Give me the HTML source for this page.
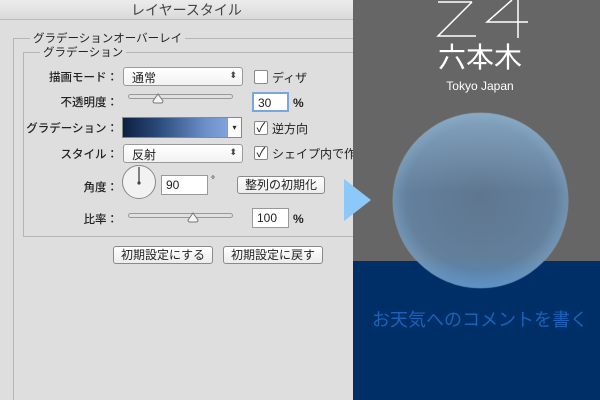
<!DOCTYPE html>
<html><head><meta charset="utf-8"><style>
*{margin:0;padding:0;box-sizing:border-box}
body{width:600px;height:400px;overflow:hidden;position:relative;background:#dedede;font-family:"Liberation Sans","Noto Sans CJK JP",sans-serif;font-size:12px;color:#222}
.a{position:absolute}
.lbl{position:absolute;text-align:right;font-size:11.5px;white-space:nowrap;font-weight:500}
.sel{position:absolute;height:19px;background:linear-gradient(#fff,#f2f2f2);border:1px solid #9a9a9a;border-radius:3px;font-size:12px;padding:1px 0 0 8px}
.sel:after{content:"⬍";position:absolute;right:5px;top:2px;font-size:9px;color:#444}
.inp{position:absolute;height:20px;background:#fff;border:1px solid #999;font-size:12px;padding:2px 0 0 4px}
.cb{position:absolute;width:14px;height:14px;background:#fff;border:1px solid #888;border-radius:2px;font-size:13px;line-height:12px;text-align:center}
.btn{position:absolute;height:18px;background:linear-gradient(#fff,#ececec);border:1px solid #8a8a8a;border-radius:3px;font-size:12px;text-align:center;line-height:16px}
.track{position:absolute;height:5px;border:1px solid #999;border-radius:3px;background:#e0e0e0}
</style></head><body>
<div class="a" style="left:0;top:0;width:353px;height:20px;background:linear-gradient(#ececec,#dadada);border-bottom:1px solid #bbb"></div>
<div class="a" style="left:0;top:0;width:353px;text-align:center;font-size:14px;color:#444;padding-left:20px;line-height:20px">レイヤースタイル</div>
<div class="a" style="left:13px;top:38px;width:1px;height:362px;background:#b5b5b5"></div>
<div class="a" style="left:13px;top:38px;width:340px;height:1px;background:#b5b5b5"></div>
<div class="a" style="left:30px;top:30px;background:#dedede;padding:0 3px;font-size:11.5px">グラデーションオーバーレイ</div>
<div class="a" style="left:23px;top:52px;width:330px;height:185px;border:1px solid #b5b5b5;border-right:none"></div>
<div class="a" style="left:40px;top:44px;background:#dedede;padding:0 3px;font-size:11.5px">グラデーション</div>

<div class="lbl" style="right:482px;top:69px">描画モード：</div>
<div class="sel" style="left:123px;top:67px;width:120px">通常</div>
<div class="cb" style="left:254px;top:70px"></div>
<div class="a" style="left:272px;top:69px">ディザ</div>

<div class="lbl" style="right:482px;top:94px">不透明度：</div>
<div class="track" style="left:128px;top:94px;width:105px"></div>
<svg class="a" style="left:151px;top:93px" width="14" height="12"><path d="M7 1 L12 8 Q12 10 10 10 L4 10 Q2 10 2 8 Z" fill="#f4f4f4" stroke="#777"/></svg>
<div class="inp" style="left:252px;top:92px;width:37px;border:2px solid #7aa6dc">30</div>
<div class="a" style="left:293px;top:96px;font-weight:bold">%</div>

<div class="lbl" style="right:482px;top:120px">グラデーション：</div>
<div class="a" style="left:122px;top:117px;width:120px;height:21px;border:1px solid #888;background:linear-gradient(90deg,#0d2040,#2a4a7a 30%,#6d8fc8 70%,#8fb0e8)"></div>
<div class="a" style="left:227px;top:118px;width:14px;height:19px;background:#fafafa;border-left:1px solid #999;font-size:8px;text-align:center;line-height:19px">▾</div>
<div class="cb" style="left:254px;top:121px">✓</div>
<div class="a" style="left:272px;top:120px">逆方向</div>

<div class="lbl" style="right:482px;top:146px">スタイル：</div>
<div class="sel" style="left:123px;top:144px;width:120px">反射</div>
<div class="cb" style="left:254px;top:146px">✓</div>
<div class="a" style="left:272px;top:145px">シェイプ内で作成</div>

<div class="lbl" style="right:482px;top:179px">角度：</div>
<svg class="a" style="left:121px;top:164px" width="36" height="36"><circle cx="18" cy="18" r="16.5" fill="#f2f2f2" stroke="#888"/><line x1="18" y1="3" x2="18" y2="19" stroke="#444" stroke-width="1.3"/><circle cx="18" cy="19" r="1.6" fill="#444"/></svg>
<div class="inp" style="left:161px;top:175px;width:47px">90</div>
<div class="a" style="left:211px;top:175px;font-size:10px">°</div>
<div class="btn" style="left:237px;top:176px;width:88px">整列の初期化</div>

<div class="lbl" style="right:482px;top:211px">比率：</div>
<div class="track" style="left:128px;top:213px;width:105px"></div>
<svg class="a" style="left:186px;top:212px" width="14" height="12"><path d="M7 1 L12 8 Q12 10 10 10 L4 10 Q2 10 2 8 Z" fill="#f4f4f4" stroke="#777"/></svg>
<div class="inp" style="left:252px;top:208px;width:37px">100</div>
<div class="a" style="left:293px;top:212px;font-weight:bold">%</div>

<div class="btn" style="left:113px;top:246px;width:100px">初期設定にする</div>
<div class="btn" style="left:223px;top:246px;width:100px">初期設定に戻す</div>

<!-- right side -->
<div class="a" style="left:353px;top:0;width:247px;height:261px;background:#666"></div>
<div class="a" style="left:353px;top:261px;width:247px;height:139px;background:#002f68"></div>
<svg class="a" style="left:344px;top:179px" width="27" height="42"><path d="M0 0 L27 21 L0 42 Z" fill="#8cc8fa"/></svg>
<svg class="a" style="left:430px;top:0" width="110" height="40"><path d="M8 2 L42 2 M42 2 L8 36 L46 36 M82 0 L57 22 L98 22 M88 0 L88 38" fill="none" stroke="#fff" stroke-width="1.5"/></svg>
<div class="a" style="left:353px;top:41px;width:254px;text-align:center;font-size:28px;color:#fff;line-height:34px">六本木</div>
<div class="a" style="left:353px;top:79px;width:254px;text-align:center;font-size:12px;color:#fff">Tokyo Japan</div>
<div class="a" style="left:393px;top:113px;width:175px;height:175px;border-radius:50%;background:radial-gradient(circle at 50% 48%,#5f7690 0%,#63809c 58%,#7ea4c6 80%,#b0e2f6 95%,#e8fcff 100%);box-shadow:0 0 1px #cfefff"></div>
<div class="a" style="left:393px;top:113px;width:175px;height:175px;border-radius:50%;background:linear-gradient(rgba(170,205,230,.45),rgba(0,0,0,0) 45%,rgba(0,0,0,0) 82%,rgba(70,140,210,.5))"></div>
<div class="a" style="left:353px;top:306px;width:254px;text-align:center;font-size:18px;color:#1a63b8">お天気へのコメントを書く</div>
</body></html>
